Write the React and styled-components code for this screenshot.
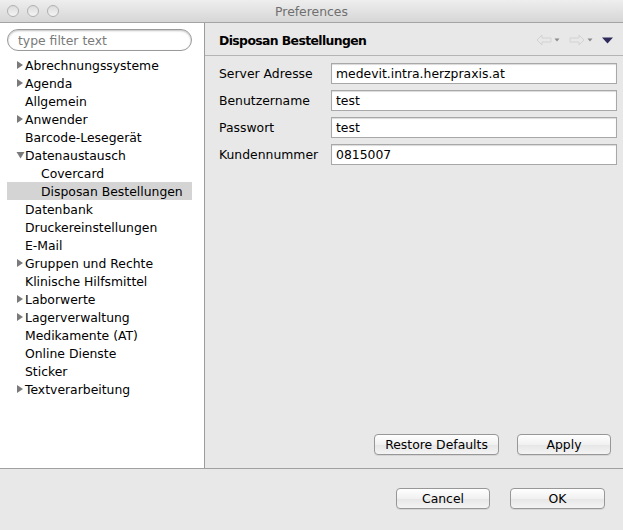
import React from "react";
import styled, { createGlobalStyle } from "styled-components";

const GlobalStyle = createGlobalStyle`
  html, body {
    margin: 0;
    padding: 0;
    background: #e8e8e8;
  }
  * { box-sizing: border-box; }
`;

const tree = [
  { name: "Abrechnungssysteme", arrow: "right" },
  { name: "Agenda", arrow: "right" },
  { name: "Allgemein" },
  { name: "Anwender", arrow: "right" },
  { name: "Barcode-Lesegerät" },
  { name: "Datenaustausch", arrow: "down" },
  { name: "Covercard", level: 1 },
  { name: "Disposan Bestellungen", level: 1, selected: true },
  { name: "Datenbank" },
  { name: "Druckereinstellungen" },
  { name: "E-Mail" },
  { name: "Gruppen und Rechte", arrow: "right" },
  { name: "Klinische Hilfsmittel" },
  { name: "Laborwerte", arrow: "right" },
  { name: "Lagerverwaltung", arrow: "right" },
  { name: "Medikamente (AT)" },
  { name: "Online Dienste" },
  { name: "Sticker" },
  { name: "Textverarbeitung", arrow: "right" },
];

const fields = [
  { label: "Server Adresse", value: "medevit.intra.herzpraxis.at" },
  { label: "Benutzername", value: "test" },
  { label: "Passwort", value: "test" },
  { label: "Kundennummer", value: "0815007" },
];

const Arrow = ({ dir }) => (
  <ArrowSlot>
    {dir === "right" && (
      <svg width="8" height="10" viewBox="0 0 8 10">
        <path d="M1 1 L7 5 L1 9 Z" fill="#7a7a7a" />
      </svg>
    )}
    {dir === "down" && (
      <svg width="9" height="8" viewBox="0 0 9 8">
        <path d="M0.5 1 L8.5 1 L4.5 7.5 Z" fill="#7a7a7a" />
      </svg>
    )}
  </ArrowSlot>
);

const NavArrows = () => (
  <Nav>
    <svg width="16" height="12" viewBox="0 0 16 12">
      <path d="M1 6 L6 1 L6 4 L15 4 L15 8 L6 8 L6 11 Z" fill="none" stroke="#d2d2d2" />
    </svg>
    <svg width="6" height="4" viewBox="0 0 6 4">
      <path d="M0.5 0.5 L5.5 0.5 L3 3.5 Z" fill="#8a8a8a" />
    </svg>
    <Gap />
    <svg width="16" height="12" viewBox="0 0 16 12">
      <path d="M15 6 L10 1 L10 4 L1 4 L1 8 L10 8 L10 11 Z" fill="none" stroke="#d2d2d2" />
    </svg>
    <svg width="6" height="4" viewBox="0 0 6 4">
      <path d="M0.5 0.5 L5.5 0.5 L3 3.5 Z" fill="#8a8a8a" />
    </svg>
    <Gap />
    <svg width="11" height="7" viewBox="0 0 11 7">
      <path d="M0 0.5 L11 0.5 L5.5 6.5 Z" fill="#2e2a5c" />
    </svg>
  </Nav>
);

export default function App() {
  return (
    <Window>
      <GlobalStyle />
      <TitleBar>
        <Lights>
          <Light />
          <Light />
          <Light />
        </Lights>
        <Title>Preferences</Title>
      </TitleBar>
      <Body>
        <Sidebar>
          <Filter placeholder="type filter text" />
          <Tree>
            {tree.map((item) => (
              <TreeRow key={item.name} $selected={item.selected} $level={item.level || 0}>
                <Arrow dir={item.arrow} />
                {item.name}
              </TreeRow>
            ))}
          </Tree>
        </Sidebar>
        <Main>
          <PageHeader>
            <PageTitle>Disposan Bestellungen</PageTitle>
            <NavArrows />
          </PageHeader>
          <Form>
            {fields.map((f) => (
              <React.Fragment key={f.label}>
                <Label>{f.label}</Label>
                <Field defaultValue={f.value} />
              </React.Fragment>
            ))}
          </Form>
          <PageButtons>
            <Button $width={125}>Restore Defaults</Button>
            <Button $width={94}>Apply</Button>
          </PageButtons>
        </Main>
      </Body>
      <Footer>
        <Button $width={94}>Cancel</Button>
        <Button $width={95}>OK</Button>
      </Footer>
    </Window>
  );
}

const Window = styled.div`
  width: 623px;
  height: 530px;
  display: flex;
  flex-direction: column;
  background: #e8e8e8;
  font-family: "DejaVu Sans", "Liberation Sans", sans-serif;
  font-size: 12.4px;
  color: #000;
  overflow: hidden;
`;

const TitleBar = styled.div`
  height: 23px;
  flex: none;
  position: relative;
  display: flex;
  align-items: center;
  justify-content: center;
  background: linear-gradient(#eeeeee, #d6d6d6);
  border-bottom: 1px solid #a4a4a4;
`;

const Lights = styled.div`
  position: absolute;
  left: 7px;
  top: 5px;
  display: flex;
  gap: 8px;
`;

const Light = styled.span`
  width: 12px;
  height: 12px;
  border-radius: 50%;
  border: 1px solid #b0b0b0;
  background: linear-gradient(#dcdcdc, #f4f4f4);
`;

const Title = styled.div`
  color: #6f6f6f;
  font-size: 12.4px;
`;

const Body = styled.div`
  height: 446px;
  flex: none;
  display: flex;
  border-bottom: 1px solid #a0a0a0;
`;

const Sidebar = styled.div`
  width: 205px;
  flex: none;
  background: #fff;
  border-right: 1px solid #9c9c9c;
  padding: 6px 0 0 0;
`;

const Filter = styled.input`
  display: block;
  width: 185px;
  height: 22px;
  margin-left: 7px;
  border: 1px solid #9a9a9a;
  border-radius: 11px;
  box-shadow: inset 0 1px 2px rgba(0, 0, 0, 0.25);
  padding: 0 10px;
  font-family: inherit;
  font-size: 12.4px;
  outline: none;
  &::placeholder {
    color: #7a7a7a;
  }
`;

const Tree = styled.div`
  margin-top: 5px;
  display: flex;
  flex-direction: column;
`;

const TreeRow = styled.div`
  height: 18px;
  display: flex;
  align-items: center;
  margin: 0 12px 0 7px;
  padding-left: ${(p) => 9 + p.$level * 16}px;
  background: ${(p) => (p.$selected ? "#d4d4d4" : "transparent")};
  white-space: nowrap;
`;

const ArrowSlot = styled.span`
  width: 9px;
  flex: none;
  display: flex;
  align-items: center;
`;

const Main = styled.div`
  flex: 1;
  display: flex;
  flex-direction: column;
`;

const PageHeader = styled.div`
  height: 33px;
  display: flex;
  align-items: center;
  justify-content: space-between;
  padding: 2px 10px 0 14px;
  border-bottom: 1px solid #b4b4b4;
`;

const PageTitle = styled.div`
  font-weight: bold;
  letter-spacing: -0.6px;
`;

const Nav = styled.div`
  display: flex;
  align-items: center;
  gap: 2px;
`;

const Gap = styled.span`
  width: 5px;
`;

const Form = styled.div`
  display: grid;
  grid-template-columns: 112px 1fr;
  row-gap: 6px;
  align-items: center;
  padding: 7px 6px 0 14px;
`;

const Label = styled.div`
  white-space: nowrap;
`;

const Field = styled.input`
  height: 21px;
  border: 1px solid #a8a8a8;
  box-shadow: inset 0 1px 1px rgba(0, 0, 0, 0.15);
  padding: 0 4px;
  font-family: inherit;
  font-size: 12.4px;
  outline: none;
  background: #fff;
`;

const PageButtons = styled.div`
  margin-top: auto;
  display: flex;
  justify-content: flex-end;
  gap: 18px;
  padding: 0 12px 13px 0;
`;

const Button = styled.button`
  width: ${(p) => p.$width}px;
  height: 21px;
  border: 1px solid #979797;
  border-radius: 4px;
  background: linear-gradient(#ffffff, #f1f1f1 50%, #e6e6e6 51%, #f4f4f4);
  box-shadow: 0 1px 0 rgba(0, 0, 0, 0.08);
  font-family: inherit;
  font-size: 12.4px;
  color: #000;
  padding: 0;
`;

const Footer = styled.div`
  flex: 1;
  display: flex;
  justify-content: flex-end;
  align-items: flex-start;
  gap: 20px;
  padding: 19px 18px 0 0;
`;
